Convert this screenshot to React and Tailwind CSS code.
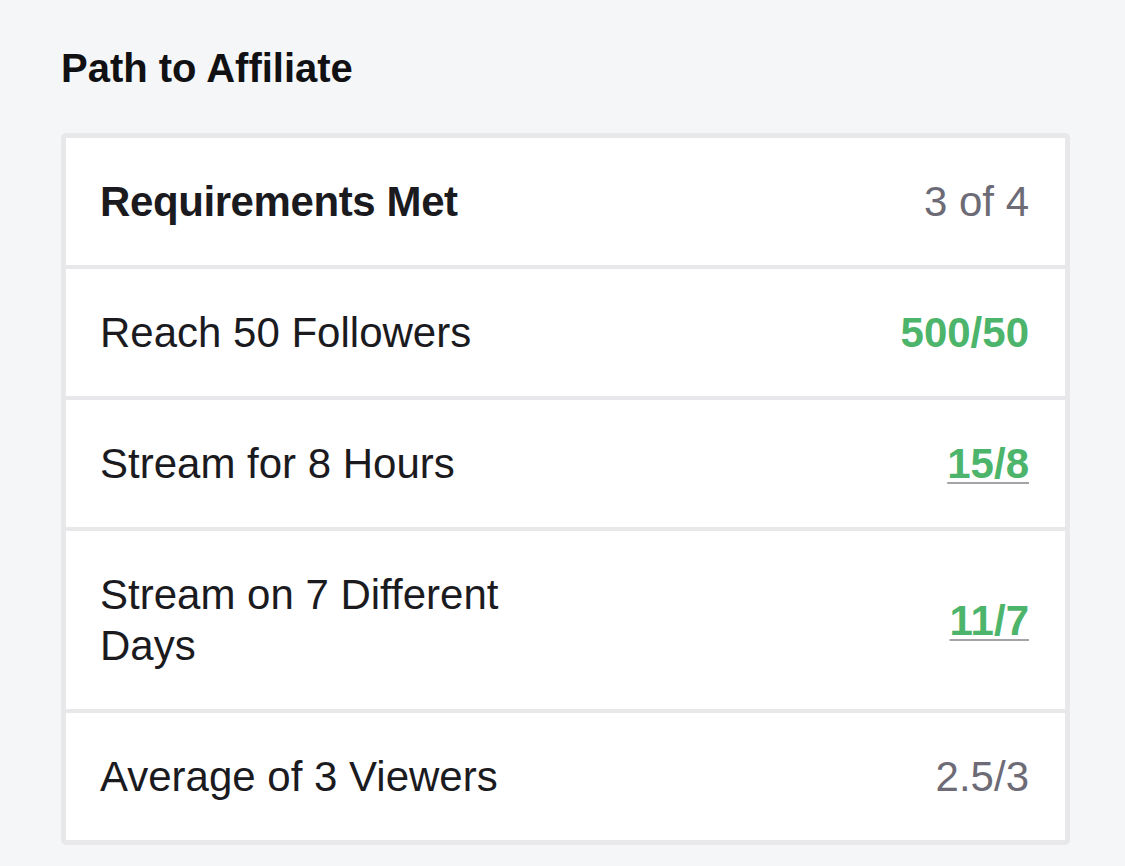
import React from "react";

const rows = [
  { label: "Reach 50 Followers", value: "500/50", met: true },
  { label: "Stream for 8 Hours", value: "15/8", met: true, link: true },
  { label: "Stream on 7 Different Days", value: "11/7", met: true, link: true },
  { label: "Average of 3 Viewers", value: "2.5/3", met: false },
];

const Row = ({ label, value, met, link }) => (
  <div className="flex items-center justify-between bg-white pl-[34px] pr-[36px] py-[38px]">
    <p className="max-w-[440px] text-[42px] leading-[51px] text-[#1b1b1f]">{label}</p>
    <span
      className={
        met
          ? "text-[42px] leading-[51px] font-bold text-[#4db46b]" +
            (link ? " underline decoration-[#a4a4a8] decoration-2 underline-offset-[4px]" : "")
          : "text-[42px] leading-[51px] text-[#6c6b76]"
      }
    >
      {value}
    </span>
  </div>
);

const App = () => {
  return (
    <div
      className="min-h-screen bg-[#f5f6f8] pl-[61px] pr-[55px] pt-[44px]"
      style={{ fontFamily: '"Liberation Sans", Arial, sans-serif' }}
    >
      <h2 className="text-[40px] leading-[48px] font-bold text-[#111114] mb-[41px]">
        Path to Affiliate
      </h2>

      <div className="flex flex-col gap-[4px] rounded-[5px] border-[5px] border-[#e8e8eb] bg-[#e8e8eb]">
        <div className="flex items-center justify-between bg-white pl-[34px] pr-[36px] py-[38px]">
          <p className="text-[42px] leading-[51px] font-bold tracking-[-0.4px] text-[#1b1b1f]">
            Requirements Met
          </p>
          <span className="text-[42px] leading-[51px] text-[#6c6b76]">3 of 4</span>
        </div>
        {rows.map((r) => (
          <Row key={r.label} {...r} />
        ))}
      </div>
    </div>
  );
};

export default App;
